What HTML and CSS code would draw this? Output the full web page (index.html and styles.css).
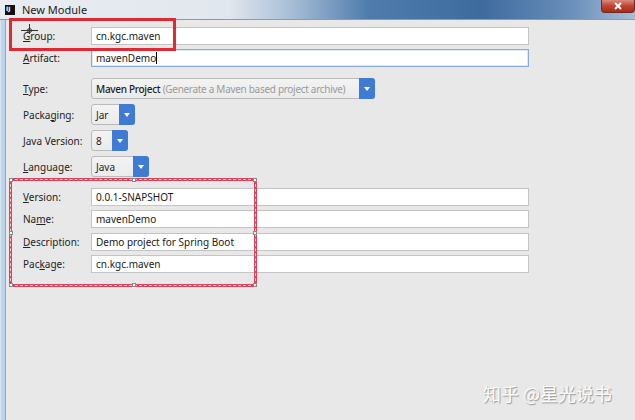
FILE: index.html
```html
<!DOCTYPE html>
<html lang="zh-CN">
<head>
    <meta charset="UTF-8">
    <title>New Module</title>
    <link rel="stylesheet" href="styles.css">
</head>
<body>
    <div class="window">
        <!-- 标题栏 -->
        <div class="titlebar">
            <div class="app-icon"><span>IJ</span></div>
            <div class="title">New Module</div>
            <div class="close-btn">
                <svg width="10" height="8" viewBox="0 0 10 8"><path d="M2 1 L8 7 M8 1 L2 7" stroke="#fff" stroke-width="2"/></svg>
            </div>
        </div>

        <div class="frame">
            <div class="frame-edge"></div>
            <div class="content">
                <div class="form">
                    <div class="section">
                        <div class="row">
                            <label class="label"><u>G</u>roup:</label>
                            <div class="input">cn.kgc.maven</div>
                        </div>
                        <div class="row">
                            <label class="label"><u>A</u>rtifact:</label>
                            <div class="input focused">mavenDemo<span class="caret"></span></div>
                        </div>
                    </div>

                    <div class="section combos">
                        <div class="row combo-row">
                            <label class="label"><u>T</u>ype:</label>
                            <div class="combo combo-type">
                                <span class="combo-text"><b>Maven Project</b> <span class="hint">(Generate a Maven based project archive)</span></span>
                                <span class="combo-btn"></span>
                            </div>
                        </div>
                        <div class="row combo-row">
                            <label class="label">Packa<u>g</u>ing:</label>
                            <div class="combo combo-pack">
                                <span class="combo-text">Jar</span>
                                <span class="combo-btn"></span>
                            </div>
                        </div>
                        <div class="row combo-row">
                            <label class="label"><u>J</u>ava Version:</label>
                            <div class="combo combo-java">
                                <span class="combo-text">8</span>
                                <span class="combo-btn"></span>
                            </div>
                        </div>
                        <div class="row combo-row">
                            <label class="label"><u>L</u>anguage:</label>
                            <div class="combo combo-lang">
                                <span class="combo-text">Java</span>
                                <span class="combo-btn"></span>
                            </div>
                        </div>
                    </div>

                    <div class="section meta">
                        <div class="row">
                            <label class="label"><u>V</u>ersion:</label>
                            <div class="input">0.0.1-SNAPSHOT</div>
                        </div>
                        <div class="row">
                            <label class="label">Na<u>m</u>e:</label>
                            <div class="input">mavenDemo</div>
                        </div>
                        <div class="row">
                            <label class="label"><u>D</u>escription:</label>
                            <div class="input">Demo project for Spring Boot</div>
                        </div>
                        <div class="row">
                            <label class="label">Pac<u>k</u>age:</label>
                            <div class="input">cn.kgc.maven</div>
                        </div>
                    </div>
                </div>
            </div>
        </div>

        <!-- 标注 -->
        <div class="mark-solid"></div>
        <div class="mark-dashed">
            <span class="handle h-tl"></span>
            <span class="handle h-tm"></span>
            <span class="handle h-tr"></span>
            <span class="handle h-ml"></span>
            <span class="handle h-mr"></span>
            <span class="handle h-bl"></span>
            <span class="handle h-bm"></span>
            <span class="handle h-br"></span>
        </div>
        <svg class="cursor" width="18" height="12" viewBox="0 0 18 12">
            <path d="M8.5 0 V10 M0 6.5 H17" stroke="#333" stroke-width="1"/>
            <circle cx="8.5" cy="6.5" r="2" fill="none" stroke="#333" stroke-width="1"/>
        </svg>

        <div class="watermark">知乎 @星光说书</div>
    </div>
</body>
</html>
```

FILE: styles.css
```css
* {
    margin: 0;
    padding: 0;
    box-sizing: border-box;
}

body {
    width: 635px;
    height: 420px;
    overflow: hidden;
    background: #e8e8e8;
    font-family: 'Noto Sans', 'Open Sans', sans-serif;
    font-size: 10px;
    color: #222;
}

.window {
    position: relative;
    width: 635px;
    height: 420px;
    display: flex;
    flex-direction: column;
}

/* 标题栏 */
.titlebar {
    height: 20px;
    flex: none;
    display: flex;
    align-items: center;
    background: linear-gradient(90deg, #e9edf2 0%, #e1e7ee 36%, #a7bdd6 46%, #4f7cad 58%, #3e6b9e 76%, #6a8fba 90%, #a7bed8 100%);
    border-bottom: 1px solid #8d9aa8;
    position: relative;
}

.app-icon {
    width: 10px;
    height: 10px;
    margin-left: 5px;
    background: #111;
    color: #fff;
    font-size: 6px;
    font-weight: bold;
    line-height: 8px;
    padding-left: 1px;
    font-family: 'DejaVu Sans', sans-serif;
}

.title {
    margin-left: 7px;
    font-size: 11px;
    color: #1b1b1b;
}

.close-btn {
    position: absolute;
    right: 0;
    top: 0;
    width: 34px;
    height: 13px;
    background: linear-gradient(#d98a7e, #c0422f 50%, #a92b1c);
    border: 1px solid #6e2a22;
    border-top: none;
    border-radius: 0 0 4px 4px;
    display: flex;
    align-items: center;
    justify-content: center;
}

.frame {
    flex: 1;
    display: flex;
}

.frame-edge {
    width: 6px;
    background: #bed4ea;
    border-right: 1px solid #93a6ba;
    border-left: 1px solid #d8e6f4;
}

.content {
    flex: 1;
}

/* 表单 */
.form {
    padding: 7px 0 0 17px;
}

.section {
    display: flex;
    flex-direction: column;
    gap: 4px;
}

.combos {
    margin-top: 11px;
    gap: 5px;
}

.meta {
    margin-top: 10.5px;
    gap: 4.5px;
}

.row {
    display: grid;
    grid-template-columns: 68px auto;
    align-items: center;
    height: 18px;
}

.combo-row {
    height: 21px;
}

.label {
    color: #222;
    white-space: nowrap;
}

.label u {
    text-underline-offset: 1px;
}

.input {
    width: 438px;
    height: 18px;
    background: #fff;
    border: 1px solid #c4c4c4;
    padding-left: 4px;
    line-height: 16px;
    color: #1a1a1a;
}

.input.focused {
    border-color: #86acda;
    box-shadow: inset 0 0 0 1px #dbe7f5;
}

.caret {
    display: inline-block;
    width: 1px;
    height: 12px;
    background: #000;
    vertical-align: -2px;
}

.combo {
    height: 21px;
    display: flex;
    align-items: center;
    background: linear-gradient(#f3f3f3, #ebebeb);
    border: 1px solid #bababa;
    border-radius: 3px;
}

.combo-text {
    flex: 1;
    min-width: 0;
    padding-left: 4px;
    white-space: nowrap;
}

.combo-type .combo-text {
    letter-spacing: -0.3px;
}

.combo-text b {
    font-weight: 500;
    color: #222;
}

.hint {
    color: #9a9a9a;
}

.combo-btn {
    flex: none;
    width: 16px;
    height: 21px;
    margin-right: -1px;
    background: #3f7bd3;
    border-radius: 0 3px 3px 0;
    position: relative;
}

.combo-btn::after {
    content: '';
    position: absolute;
    left: 5px;
    top: 9px;
    border-left: 3px solid transparent;
    border-right: 3px solid transparent;
    border-top: 4px solid #fff;
}

.combo-type { width: 284px; }
.combo-pack { width: 44px; }
.combo-java { width: 37px; }
.combo-lang { width: 58px; }

/* 标注框 */
.mark-solid {
    position: absolute;
    left: 9px;
    top: 18px;
    width: 167px;
    height: 33px;
    border: 3px solid #df2a36;
}

.mark-dashed {
    position: absolute;
    left: 9px;
    top: 178px;
    width: 248px;
    height: 109px;
    border: 3px solid #d9435b;
    outline: 1px dashed #f7cbd2;
    outline-offset: -2px;
}

.handle {
    position: absolute;
    width: 4px;
    height: 4px;
    background: #fff;
    border: 1px solid #888;
}

.h-tl { left: -3px; top: -3px; }
.h-tm { left: 120px; top: -3px; }
.h-tr { right: -3px; top: -3px; }
.h-ml { left: -3px; top: 50px; }
.h-mr { right: -3px; top: 50px; }
.h-bl { left: -3px; bottom: -3px; }
.h-bm { left: 120px; bottom: -3px; }
.h-br { right: -3px; bottom: -3px; }

.cursor {
    position: absolute;
    left: 21px;
    top: 24px;
}

.watermark {
    position: absolute;
    left: 483px;
    top: 380px;
    font-family: 'Noto Sans CJK SC', sans-serif;
    font-size: 18px;
    color: #fbfbfb;
    text-shadow: 1px 1px 1px rgba(0, 0, 0, 0.35);
    white-space: nowrap;
}
```
